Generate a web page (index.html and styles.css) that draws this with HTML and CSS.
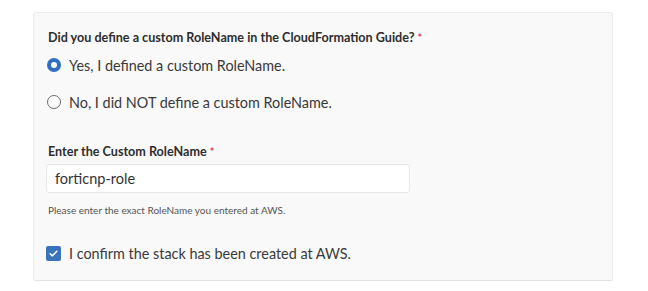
FILE: index.html
```html
<!DOCTYPE html>
<html lang="en">
<head>
    <meta charset="UTF-8">
    <title>Custom RoleName</title>
    <link rel="stylesheet" href="styles.css">
</head>
<body>
    <form class="panel">
        <div class="field-label question">Did you define a custom RoleName in the CloudFormation Guide? <span class="required">*</span></div>

        <div class="radio-group">
            <label class="option">
                <input type="radio" name="customRole" value="yes" checked>
                <span class="radio"></span>
                <span class="option-text">Yes, I defined a custom RoleName.</span>
            </label>
            <label class="option">
                <input type="radio" name="customRole" value="no">
                <span class="radio"></span>
                <span class="option-text">No, I did NOT define a custom RoleName.</span>
            </label>
        </div>

        <div class="field-label role-label">Enter the Custom RoleName <span class="required">*</span></div>
        <input class="text-input" type="text" value="forticnp-role">
        <div class="help">Please enter the exact RoleName you entered at AWS.</div>

        <label class="option confirm">
            <input type="checkbox" checked>
            <span class="checkbox">
                <svg viewBox="0 0 16 16" width="11" height="11"><path d="M3.2 8.4 L6.4 11.4 L12.8 4.8" fill="none" stroke="#fff" stroke-width="2.2" stroke-linecap="round" stroke-linejoin="round"/></svg>
            </span>
            <span class="option-text">I confirm the stack has been created at AWS.</span>
        </label>
    </form>
</body>
</html>
```

FILE: styles.css
```css
body {
    margin: 0;
    background: #ffffff;
    font-family: Lato, 'Open Sans', Arial, sans-serif;
    color: #333333;
}

.panel {
    box-sizing: border-box;
    margin: 12px 0 0 33px;
    width: 580px;
    padding: 17px 13px 15px 12px;
    background: #f9f9f9;
    border: 1px solid #ececec;
    border-bottom-color: #e2e2e2;
    border-radius: 3px;
    display: flex;
    flex-direction: column;
    align-items: flex-start;
}

.field-label {
    font-size: 12.6px;
    font-weight: 700;
    line-height: 16px;
    margin-left: 2px;
    color: #2e2e2e;
}

.required {
    color: #d9474f;
    font-size: 11px;
}

.radio-group {
    display: flex;
    flex-direction: column;
    gap: 13px;
    margin-top: 7px;
}

.option {
    display: flex;
    align-items: center;
    height: 24px;
    cursor: pointer;
}

.option input {
    display: none;
}

.option-text {
    font-size: 14.4px;
    margin-left: 8px;
    color: #3a3a3a;
}

.radio {
    box-sizing: border-box;
    width: 14px;
    height: 14px;
    margin-left: 1px;
    border-radius: 50%;
    border: 1.5px solid #6a6a6a;
    background: #ffffff;
}

.option input:checked + .radio {
    border: 4.5px solid #2f6fbf;
    background: #ffffff;
}

.role-label {
    margin-top: 30px;
}

.text-input {
    box-sizing: border-box;
    margin-top: 4px;
    width: 364px;
    height: 29px;
    padding: 0 8px;
    border: 1px solid #e8e8e8;
    border-radius: 3px;
    background: #ffffff;
    font-family: inherit;
    font-size: 14.5px;
    color: #333333;
    outline: none;
}

.help {
    margin-top: 10px;
    margin-left: 2px;
    font-size: 10px;
    line-height: 14px;
    color: #555555;
}

.confirm {
    margin-top: 24px;
}

.checkbox {
    box-sizing: border-box;
    width: 15px;
    height: 15px;
    border-radius: 2px;
    background: #3a73b9;
    display: flex;
    align-items: center;
    justify-content: center;
}
```
